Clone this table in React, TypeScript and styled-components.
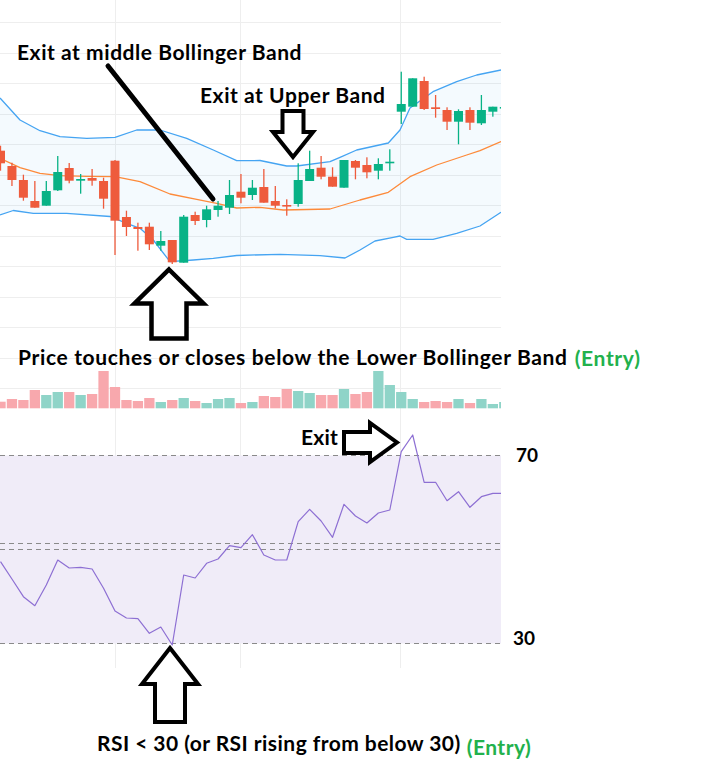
import styled, { createGlobalStyle } from "styled-components";

const GlobalStyle = createGlobalStyle`
  html, body {
    margin: 0;
    padding: 0;
    background: #ffffff;
  }
  body {
    font-family: Lato, "Open Sans", "Liberation Sans", sans-serif;
  }
`;

const GREEN = "#08b286";
const RED = "#ee5b3c";
const VOL_UP = "#8fd4c8";
const VOL_DOWN = "#f8a8ad";
const BAND = "#45a4f2";
const BASIS = "#fd8a3a";
const GRID = "#eeeeee";
const ENTRY = "#22b14c";

const CHART_W = 501;
const CHART_H = 670;
const STEP = 11.45;
const cx = (i: number) => 0.5 + i * STEP;

// bodyTop, bodyBottom, wickTop, wickBottom, rising
type Candle = [number, number, number, number, boolean];

const CANDLES: Candle[] = [
  [150.7, 163.3, 145.7, 170.7, false],
  [166, 180, 162.7, 186, false],
  [180, 197.7, 174.7, 200.7, false],
  [201, 207.7, 181, 207.7, false],
  [191, 205.7, 181, 205.7, true],
  [172, 190.3, 156, 191, true],
  [168, 180.7, 163, 183.3, false],
  [179, 180.7, 174, 193.7, true],
  [178, 180.7, 169, 185.7, false],
  [181, 198.7, 177.7, 208.7, false],
  [160.7, 220.7, 160, 255, false],
  [217, 227, 210.7, 236, false],
  [227, 229, 222.7, 250.7, false],
  [226.7, 244.3, 222.7, 250, false],
  [241, 245.7, 231, 250.7, true],
  [240, 262.3, 240, 264, false],
  [216.7, 262.7, 215, 262.7, true],
  [215, 221, 211.7, 225, false],
  [209.3, 220, 205.7, 227.3, true],
  [205.7, 210, 201, 216.7, true],
  [195, 207.7, 180, 214, true],
  [191.7, 197.7, 174, 203.3, false],
  [187.7, 195, 180, 200, true],
  [187, 202.7, 169, 202.7, false],
  [201, 205.7, 186, 208.3, false],
  [205, 206.5, 199.3, 215.7, false],
  [180, 204, 163.3, 206.7, true],
  [169, 181, 150.7, 181, true],
  [167.7, 176.7, 156, 179.3, false],
  [176.7, 186.7, 167.3, 186.7, false],
  [160, 187.7, 160, 187.7, true],
  [161, 167.7, 160, 179.3, false],
  [165, 172.3, 157.3, 178.3, false],
  [164, 170.7, 158.3, 179.3, true],
  [161.7, 163.3, 149.3, 170.7, true],
  [104, 111.7, 71.7, 124, true],
  [78.3, 106.7, 78.3, 106.7, true],
  [81, 109, 76.7, 110, false],
  [107.3, 109, 95, 117.7, false],
  [110, 121.7, 107.3, 130, false],
  [111, 121.7, 109.3, 144.3, true],
  [110, 122.7, 107.3, 130, false],
  [110, 123.3, 95, 125, true],
  [106.7, 111.7, 106.7, 116.7, true],
  [107, 108.5, 104, 111, true],
];

const VOLUME_BASE = 408.3;
const VOLUME_TOPS = [
  401.7, 399, 400, 390, 395, 392, 392, 395, 394, 371, 387, 400, 401, 398, 402,
  400, 398, 401, 403, 399, 398, 403, 402, 396, 397, 389, 391, 393, 395, 395,
  389, 394, 392, 371, 385, 392, 399, 402, 401, 402, 399, 403, 399, 404, 402,
];
const VOLUME_UP = [
  false, false, false, false, true, true, false, true, false, false, false,
  false, false, false, true, false, true, false, true, true, true, false, true,
  false, false, false, true, true, false, false, true, false, false, true, true,
  true, true, false, false, false, true, false, true, true, true,
];

const RSI = [
  561.7, 579, 596.7, 605.7, 585, 560, 568, 567.3, 569, 588.3, 611, 618, 618.7,
  633.3, 627, 645, 575, 578, 563.3, 559, 545.7, 547.7, 534.7, 555, 560, 560,
  521.7, 509.3, 521, 537.3, 504.3, 516, 523, 513, 510, 451.7, 435, 482.3,
  482.3, 500.7, 491.7, 507.3, 496.7, 493.3, 493.3,
];

const UPPER: [number, number][] = [
  [0, 98], [20, 120], [40, 130.7], [60, 136.7], [86.7, 138.3], [115, 137.3],
  [136.7, 130], [160, 130], [186.7, 138.3], [213.3, 150], [236.7, 160.7],
  [260, 160.5], [286.7, 166], [296.7, 166], [330, 161.7], [340, 157.3],
  [356.7, 150], [388.3, 143], [400, 130], [410, 108], [433, 91.7],
  [456.7, 81.7], [476.7, 75], [501, 70],
];
const BASIS_LINE: [number, number][] = [
  [0, 158.3], [20, 167.7], [40, 173.3], [60, 175.7], [86.7, 176.3],
  [115, 176.7], [140, 181.7], [170, 194], [196.7, 199.3], [216.7, 203.3],
  [236.7, 208], [260, 207.3], [283.3, 210], [330, 209], [360, 200],
  [388.3, 192.3], [410, 176.7], [436.7, 165], [466.7, 155], [480, 150.7],
  [501, 141.5],
];
const LOWER: [number, number][] = [
  [0, 215], [13.3, 210.5], [33.3, 213.3], [66.7, 213.3], [110, 216.5],
  [126.7, 223.3], [140, 228.3], [153.3, 240], [170, 261.7], [193.3, 260],
  [213.3, 258.3], [236.7, 255.5], [280, 254.3], [320, 255.7], [345, 258],
  [360, 250], [375, 241], [393.3, 237.3], [400, 236], [406.7, 239.3],
  [433, 239.3], [456.7, 233.3], [480, 226], [501, 212.3],
];

const pts = (list: [number, number][]) =>
  list.map(([x, y]) => `${x},${y}`).join(" ");

const PRICE_GRID = Array.from({ length: 13 }, (_, k) => Math.round(22.3 + k * 30.5) + 0.5);
const RSI_GRID = [502.5, 596.5];
const TIME_GRID = [115.5, 240.5, 400.5];
const RSI_DASHES = [455.5, 543.5, 549.5, 643.5];

const ChartSvg = styled.svg`
  display: block;
  flex: none;
`;

const PriceChart = () => (
  <ChartSvg width={CHART_W} height={CHART_H} viewBox={`0 0 ${CHART_W} ${CHART_H}`}>
    <g stroke={GRID} strokeWidth={1}>
      {PRICE_GRID.map((y) => (
        <line key={y} x1={0} x2={CHART_W} y1={y} y2={y} />
      ))}
      {RSI_GRID.map((y) => (
        <line key={y} x1={0} x2={CHART_W} y1={y} y2={y} />
      ))}
      {TIME_GRID.map((x) => (
        <line key={x} x1={x} x2={x} y1={0} y2={668} />
      ))}
    </g>

    <polygon
      points={pts([...UPPER, ...[...LOWER].reverse()])}
      fill="rgba(33, 150, 243, 0.05)"
    />
    <g fill="none" strokeWidth={1.3} strokeLinejoin="round">
      <polyline points={pts(UPPER)} stroke={BAND} />
      <polyline points={pts(LOWER)} stroke={BAND} />
      <polyline points={pts(BASIS_LINE)} stroke={BASIS} />
    </g>

    {CANDLES.map(([bt, bb, wt, wb, up], i) => {
      const x = cx(i);
      return (
        <g key={i} fill={up ? GREEN : RED}>
          <rect x={x - 0.65} y={wt} width={1.3} height={wb - wt} />
          <rect x={x - 4.5} y={bt} width={9} height={Math.max(bb - bt, 1.6)} />
        </g>
      );
    })}

    {VOLUME_TOPS.map((top, i) => (
      <rect
        key={i}
        x={cx(i) - 5.15}
        y={top}
        width={10.3}
        height={VOLUME_BASE - top}
        fill={VOLUME_UP[i] ? VOL_UP : VOL_DOWN}
      />
    ))}

    <rect x={0} y={455.5} width={CHART_W} height={188} fill="#f0ecf8" />
    <g stroke="#8a8a8a" strokeWidth={1} strokeDasharray="5 4">
      {RSI_DASHES.map((y) => (
        <line key={y} x1={0} x2={CHART_W} y1={y} y2={y} />
      ))}
    </g>
    <polyline
      points={RSI.map((y, i) => `${cx(i)},${y}`).join(" ")}
      fill="none"
      stroke="#8d6fd3"
      strokeWidth={1.2}
      strokeLinejoin="round"
    />
  </ChartSvg>
);

type Direction = "up" | "down" | "right";

interface ArrowProps {
  dir: Direction;
  tipX: number;
  tipY: number;
  headW: number;
  headL: number;
  shaftW: number;
  shaftL: number;
  stroke?: number;
}

const Overlay = styled.svg<{ $left: number; $top: number }>`
  position: absolute;
  left: ${(p) => p.$left}px;
  top: ${(p) => p.$top}px;
  overflow: visible;
  pointer-events: none;
`;

// hollow block arrow, outlined in black like a marker drawing
const BlockArrow = ({ dir, tipX, tipY, headW, headL, shaftW, shaftL, stroke = 4 }: ArrowProps) => {
  const len = headL + shaftL;
  const h = headW / 2;
  const s = shaftW / 2;
  // drawn pointing up, tip at (h, 0)
  const up: [number, number][] = [
    [h, 0], [headW, headL], [h + s, headL], [h + s, len],
    [h - s, len], [h - s, headL], [0, headL],
  ];
  let shape: [number, number][] = up;
  let w = headW;
  let ht = len;
  let left = tipX - h;
  let top = tipY;
  if (dir === "down") {
    shape = up.map(([x, y]) => [x, len - y]);
    top = tipY - len;
  } else if (dir === "right") {
    shape = up.map(([x, y]) => [len - y, x]);
    w = len;
    ht = headW;
    left = tipX - len;
    top = tipY - h;
  }
  const pad = stroke;
  return (
    <Overlay $left={left - pad} $top={top - pad} width={w + pad * 2} height={ht + pad * 2}>
      <polygon
        points={shape.map(([x, y]) => `${x + pad},${y + pad}`).join(" ")}
        fill="#ffffff"
        stroke="#000000"
        strokeWidth={stroke}
        strokeLinejoin="miter"
      />
    </Overlay>
  );
};

const Pointer = ({ x1, y1, x2, y2 }: { x1: number; y1: number; x2: number; y2: number }) => {
  const left = Math.min(x1, x2) - 4;
  const top = Math.min(y1, y2) - 4;
  return (
    <Overlay $left={left} $top={top} width={Math.abs(x2 - x1) + 8} height={Math.abs(y2 - y1) + 8}>
      <line
        x1={x1 - left}
        y1={y1 - top}
        x2={x2 - left}
        y2={y2 - top}
        stroke="#000000"
        strokeWidth={5}
        strokeLinecap="round"
      />
    </Overlay>
  );
};

const Figure = styled.div`
  width: 716px;
  height: 773px;
  display: flex;
  flex-direction: column;
  overflow: hidden;
`;

const ChartRow = styled.div`
  position: relative;
  display: flex;
  height: 726px;
  flex: none;
`;

const AxisColumn = styled.div`
  display: flex;
  flex-direction: column;
  align-items: flex-start;
  gap: 164px;
  padding: 445px 0 0 12px;
  font-size: 19px;
  font-weight: 700;
  line-height: 1;
`;

const AxisTag = styled.span<{ $indent?: number }>`
  margin-left: ${(p) => p.$indent ?? 0}px;
`;

const Callout = styled.div<{ $x: number; $y: number; $track?: number }>`
  position: absolute;
  left: ${(p) => p.$x}px;
  top: ${(p) => p.$y}px;
  font-size: 21px;
  font-weight: 700;
  letter-spacing: ${(p) => p.$track ?? 0.55}px;
  line-height: 1;
  color: #000000;
  white-space: nowrap;
`;

const Entry = styled.span<{ $drop: number; $gap: number }>`
  color: ${ENTRY};
  margin-left: ${(p) => p.$gap}px;
  vertical-align: ${(p) => -p.$drop}px;
`;

const Caption = styled.div`
  padding: 6px 0 0 97px;
  font-size: 21px;
  font-weight: 700;
  letter-spacing: 0.45px;
  line-height: 1;
  color: #000000;
  white-space: nowrap;
`;

const App = () => (
  <>
    <GlobalStyle />
    <Figure>
      <ChartRow>
        <PriceChart />
        <AxisColumn>
          <AxisTag $indent={3}>70</AxisTag>
          <AxisTag>30</AxisTag>
        </AxisColumn>

        <Callout $x={17} $y={41}>Exit at middle Bollinger Band</Callout>
        <Pointer x1={108} y1={66} x2={213} y2={199} />

        <Callout $x={200} $y={84}>Exit at Upper Band</Callout>
        <BlockArrow dir="down" tipX={293} tipY={157} headW={40} headL={25} shaftW={21} shaftL={21} />

        <BlockArrow dir="up" tipX={169} tipY={269} headW={69} headL={34} shaftW={35} shaftL={35} stroke={4.5} />
        <Callout $x={18} $y={345.5} $track={0.65}>
          Price touches or closes below the Lower Bollinger Band
          <Entry $drop={1.5} $gap={7}>(Entry)</Entry>
        </Callout>

        <Callout $x={301} $y={425.5} $track={0.2}>Exit</Callout>
        <BlockArrow dir="right" tipX={397} tipY={442.5} headW={39} headL={27} shaftW={21} shaftL={26} />

        <BlockArrow dir="up" tipX={170} tipY={648} headW={56} headL={36} shaftW={30} shaftL={38} />
      </ChartRow>
      <Caption>
        RSI &lt; 30 (or RSI rising from below 30)
        <Entry $drop={3.5} $gap={6}>(Entry)</Entry>
      </Caption>
    </Figure>
  </>
);

export default App;
